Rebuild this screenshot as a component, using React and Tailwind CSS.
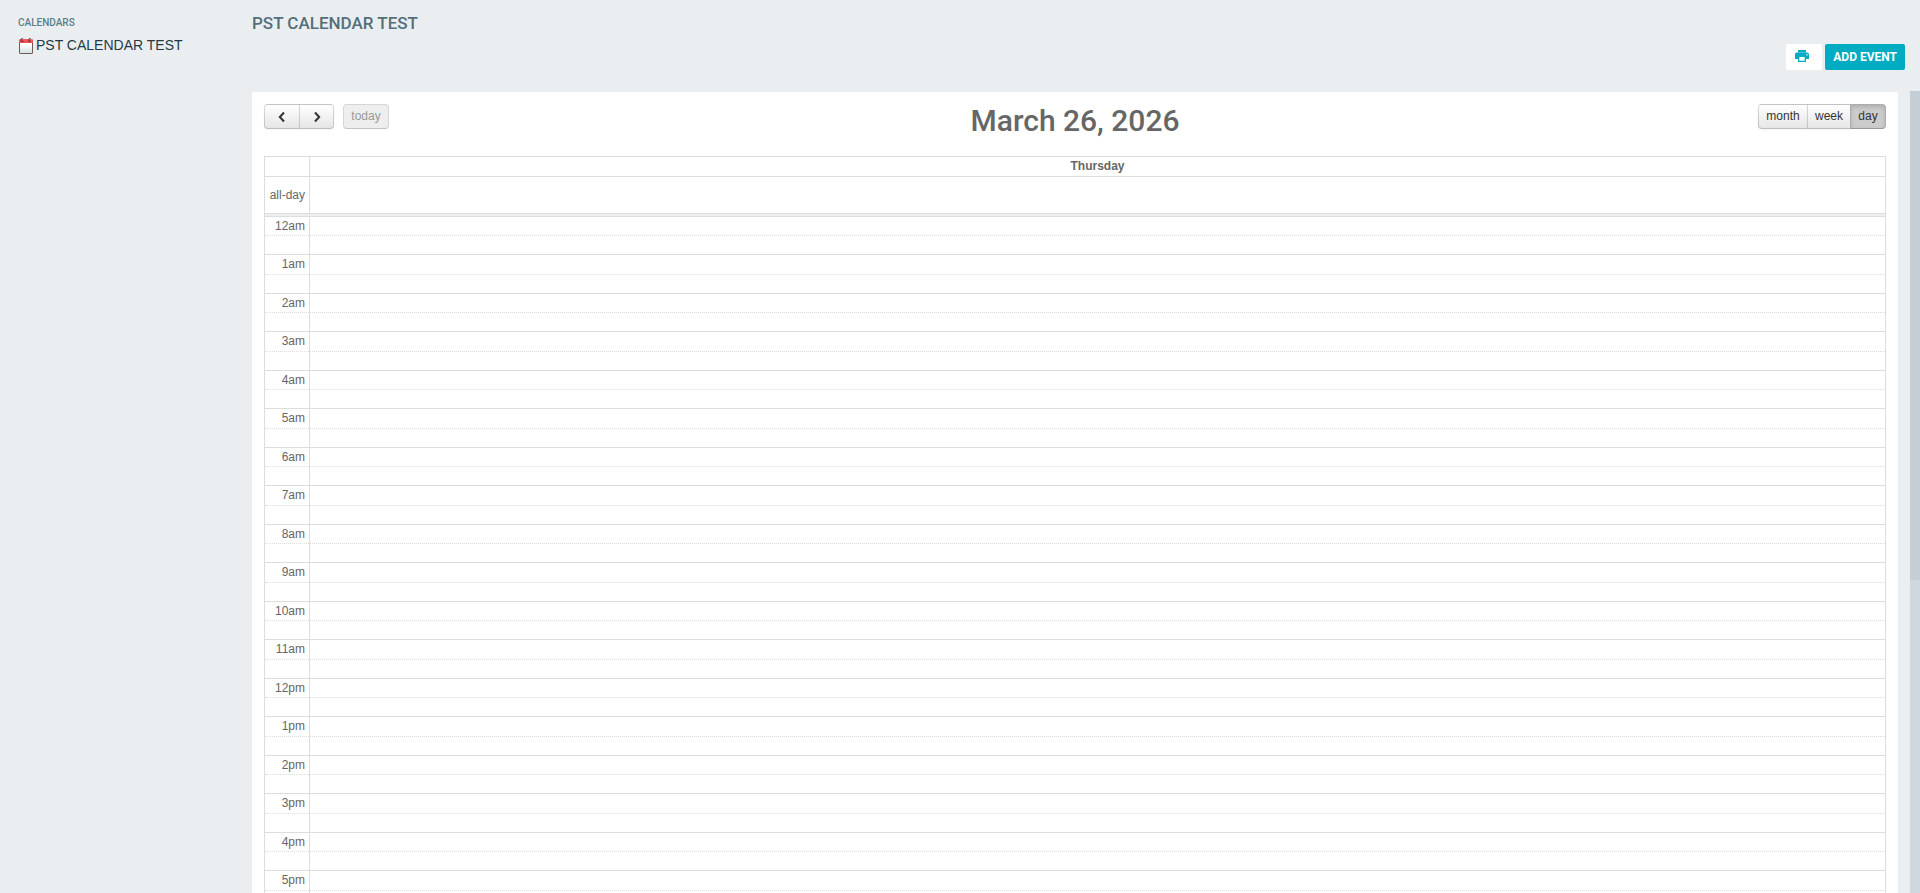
import { useState } from "react";

const HOURS = Array.from({ length: 24 }, (_, hour) => ({
  hour,
  label: `${hour % 12 === 0 ? 12 : hour % 12}${hour < 12 ? "am" : "pm"}`,
}));

const VIEWS = [
  { name: "month", width: "w-[50px]" },
  { name: "week", width: "-ml-px w-11" },
  { name: "day", width: "-ml-px w-9" },
];

function CalendarIcon() {
  return (
    <svg width="14" height="16" viewBox="0 0 14 16" aria-hidden="true">
      <defs>
        <linearGradient id="sheet" x1="0" y1="0" x2="0" y2="1">
          <stop offset="0.3" stopColor="#ffffff" />
          <stop offset="1" stopColor="#d3e0e0" />
        </linearGradient>
      </defs>
      <rect x="0.5" y="2" width="13" height="13.5" rx="0.5" fill="url(#sheet)" stroke="#6b5a5a" />
      <path d="M0 2.2Q0 1.2 1 1.2h12q1 0 1 1V5H0z" fill="#ee5558" />
      <path
        d="M2.2 3.6V1.4a1 1 0 0 1 1.9-.4M9.8 3.6V1.4a1 1 0 0 1 1.9-.4"
        fill="none"
        stroke="#6e2f33"
        strokeWidth="0.9"
      />
      <circle cx="3.6" cy="3.3" r="0.9" fill="#8c2327" />
      <circle cx="10.6" cy="3.3" r="0.9" fill="#8c2327" />
    </svg>
  );
}

function PrintIcon() {
  return (
    <svg width="14" height="12" viewBox="0 0 14 12" fill="#00acc1" aria-hidden="true">
      <path d="M3 0h8v2.5H3z" />
      <path
        fillRule="evenodd"
        d="M2 2.5h10a2 2 0 0 1 2 2V9h-3v3H3V9H0V4.5a2 2 0 0 1 2-2zM4.3 7v3.7h5.4V7zM11.3 4.3v1.3h1.3V4.3z"
      />
    </svg>
  );
}

function Chevron({ d }) {
  return (
    <svg width="8" height="12" viewBox="0 0 8 12" fill="none" stroke="#333" strokeWidth="2" aria-hidden="true">
      <path d={d} />
    </svg>
  );
}

const fcButton =
  "flex h-[25px] items-center justify-center border border-black/15 border-b-black/25 bg-linear-to-b from-white to-[#e6e6e6] text-[#333] shadow-[0_1px_2px_rgba(0,0,0,0.05)]";

export default function App() {
  const [view, setView] = useState("day");

  return (
    <div className="flex h-screen overflow-hidden bg-[#eaeef1] font-['Liberation_Sans',Arial,sans-serif] text-[#666]">
      {/* Sidebar */}
      <aside className="w-[252px] shrink-0 px-[18px] pt-4">
        <h2 className="font-['Roboto',sans-serif] text-[10px] leading-[14px] font-medium text-[#5a7f8a]">
          CALENDARS
        </h2>
        <a href="#calendar" className="mt-2 ml-px flex items-start gap-[3px] text-sm leading-[14px] text-[#263a46]">
          <CalendarIcon />
          PST CALENDAR TEST
        </a>
      </aside>

      <main className="flex min-w-0 flex-1 flex-col">
        {/* Page header */}
        <header className="flex h-[91px] shrink-0 justify-between pr-[15px]">
          <h1 className="pt-3 font-['Roboto',sans-serif] text-[17px] leading-[22px] font-medium text-[#546e7a]">
            PST CALENDAR TEST
          </h1>
          <div className="flex gap-[3px] pt-11">
            <button
              type="button"
              aria-label="Print"
              className="flex h-[26px] w-9 items-center rounded-xs bg-white pb-0.5 pl-[9px]"
            >
              <PrintIcon />
            </button>
            <button
              type="button"
              className="h-[26px] rounded-xs bg-[#00acc1] px-2 font-['Roboto',sans-serif] text-xs font-bold text-white"
            >
              ADD EVENT
            </button>
          </div>
        </header>

        <div className="flex min-h-0 flex-1">
          <section className="mt-px mr-3 min-w-0 flex-1 overflow-y-auto rounded-t-xs bg-white px-3 pt-3 [scrollbar-width:none]">
            {/* Toolbar */}
            <div className="grid h-[52px] grid-cols-[1fr_auto_1fr] items-start text-xs">
              <div className="flex">
                <button type="button" aria-label="Previous day" className={`${fcButton} w-9 rounded-l`}>
                  <Chevron d="M6 1.5 1.8 6 6 10.5" />
                </button>
                <button type="button" aria-label="Next day" className={`${fcButton} -ml-px w-[35px] rounded-r`}>
                  <Chevron d="M2 1.5 6.2 6 2 10.5" />
                </button>
                <button
                  type="button"
                  disabled
                  className="ml-[9px] flex h-[25px] w-[46px] items-center justify-center rounded border border-[#d6d6d6] border-b-[#c4c4c4] bg-[#eee] pb-0.5 text-[#999]"
                >
                  today
                </button>
              </div>

              <h2 className="font-['Roboto',sans-serif] text-3xl leading-[34px] font-medium">March 26, 2026</h2>

              <div className="flex justify-end">
                {VIEWS.map(({ name, width }) => (
                  <button
                    key={name}
                    type="button"
                    onClick={() => setView(name)}
                    className={`flex h-[25px] items-center justify-center border border-black/15 border-b-black/25 pb-0.5 text-[#333] first:rounded-l last:rounded-r ${width} ${
                      view === name
                        ? "bg-[#ccc] shadow-[inset_0_2px_4px_rgba(0,0,0,0.15)]"
                        : "bg-linear-to-b from-white to-[#e6e6e6] shadow-[0_1px_2px_rgba(0,0,0,0.05)]"
                    }`}
                  >
                    {name}
                  </button>
                ))}
              </div>
            </div>

            {/* Day grid */}
            <table className="w-full table-fixed border-collapse border border-[#ddd] text-xs">
              <colgroup>
                <col className="w-[45px]" />
                <col />
              </colgroup>
              <thead>
                <tr className="h-5">
                  <th className="border border-[#ddd]"></th>
                  <th className="border border-[#ddd] p-0 align-top leading-[18px] font-bold">Thursday</th>
                </tr>
              </thead>
              <tbody>
                <tr className="h-[37px]">
                  <td className="border border-[#ddd] p-0 pr-1 text-right">all-day</td>
                  <td className="border border-[#ddd]"></td>
                </tr>
                <tr className="h-[3px]">
                  <td colSpan={2} className="border border-[#ddd] bg-[#eee] p-0"></td>
                </tr>
              </tbody>
              {HOURS.map(({ hour, label }) => (
                <tbody key={label}>
                  <tr className={hour % 2 === 0 ? "h-[19px]" : "h-5"}>
                    <td className="border border-b-0 border-[#ddd] p-0 pr-1 text-right align-top leading-[18px]">
                      {label}
                    </td>
                    <td className="border border-b-0 border-[#ddd] p-0"></td>
                  </tr>
                  <tr className="h-[19px]">
                    <td className="border-x border-t border-[#ddd] p-0 [border-top-style:dotted]"></td>
                    <td className="border-x border-t border-[#ddd] p-0 [border-top-style:dotted]"></td>
                  </tr>
                </tbody>
              ))}
            </table>
          </section>

          {/* Scroll track */}
          <div className="w-[10px] shrink-0 bg-[#cfd8df]">
            <div className="h-[61%] bg-[#c5cdd5]"></div>
          </div>
        </div>
      </main>
    </div>
  );
}
